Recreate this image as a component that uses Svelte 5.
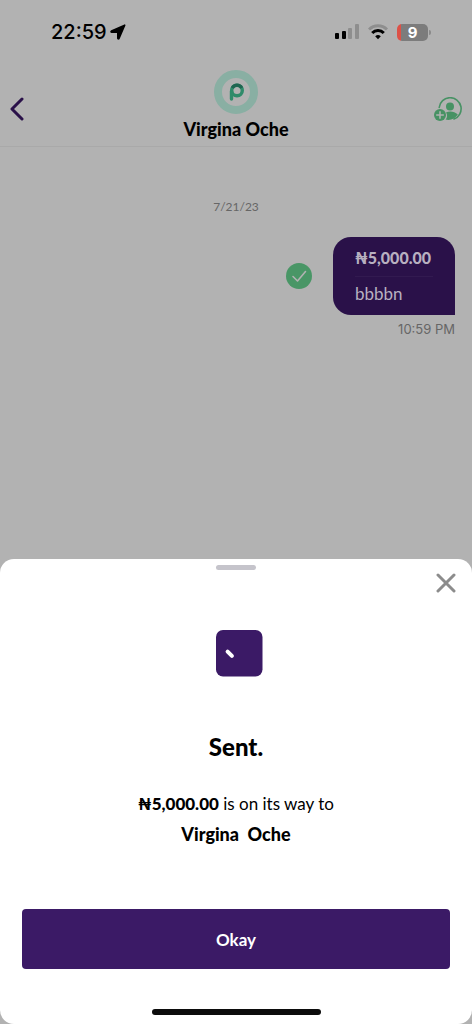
<script lang="ts">
  type Message = { amount: string; note: string; time: string };

  const contact = { first: 'Virgina', last: 'Oche' };
  const chatDate = '7/21/23';
  const messages: Message[] = [{ amount: '₦5,000.00', note: 'bbbbn', time: '10:59 PM' }];

  let open = $state(true);

  function close() {
    open = false;
  }
</script>

<div class="screen">
  <div class="status">
    <div class="clock">
      <span>22:59</span>
      <svg width="16" height="16" viewBox="0 0 16 16" aria-hidden="true">
        <path d="M14.7 1.2 9 14.4c-.3.7-1.2.5-1.2-.2V8.2H1.7c-.8 0-.9-.9-.2-1.2Z" stroke="#000" stroke-width="1.6" stroke-linejoin="round" />
      </svg>
    </div>
    <div class="signals">
      <svg width="24" height="16" viewBox="0 0 24 16" aria-hidden="true">
        <rect y="9" width="4" height="6" rx="1" />
        <rect x="7" y="7" width="4" height="8" rx="1" />
        <rect x="13" y="4" width="4" height="11" rx="1" fill="#8e8e8e" />
        <rect x="20" y="0" width="4" height="15" rx="1" fill="#8e8e8e" />
      </svg>
      <svg width="20" height="16" viewBox="0 0 20 16" fill="none" stroke-width="3" aria-hidden="true">
        <path d="M1 5.5C6 .4 14 .4 19 5.500" stroke="#8e8e8e" />
        <path d="M4.2 9C7.4 5.700 12.600 5.700 15.800 9" stroke="#000" />
        <path d="M7.2 12.2a4.2 4.2 0 0 1 5.6 0L10 15.2Z" fill="#000" />
      </svg>
      <div class="battery"><span>9</span></div>
    </div>
  </div>

  <header class="nav">
    <button class="icon back" type="button" aria-label="Back">
      <svg width="14" height="24" viewBox="0 0 14 24" fill="none" aria-hidden="true">
        <path d="M12 2 2 12l10 10" stroke="#2a1149" stroke-width="3" stroke-linecap="round" stroke-linejoin="round" />
      </svg>
    </button>
    <div class="contact">
      <svg width="44" height="44" viewBox="0 0 44 44" fill="none" aria-hidden="true">
        <circle cx="22" cy="22" r="18" stroke="#89afa3" stroke-width="8" />
        <circle cx="23" cy="20.5" r="5.3" stroke="#2f8b6a" stroke-width="3.4" />
        <path d="M17.500 21v8" stroke="#2f8b6a" stroke-width="3.400" stroke-linecap="round" />
        <path d="M18.300 18a5.300 5.300 0 0 1 9.400 0" stroke="#206651" stroke-width="3.400" />
      </svg>
      <h1>{contact.first} {contact.last}</h1>
    </div>
    <button class="icon add" type="button" aria-label="Add contact">
      <svg width="28" height="24" viewBox="0 0 28 24" fill="none" aria-hidden="true">
        <path d="M5.2 10.5A11 11 0 1 1 20 22" stroke="#479264" stroke-width="1.6" stroke-linecap="round" />
        <circle cx="16" cy="9.5" r="4" fill="#479264" />
        <path d="M12 15.500c3-1.500 8.500-1.500 11.800 2.100-2.500 4.400-7.400 6-12.200 5 1.900-2.200 2.100-4.800.4-7.100Z" fill="#479264" />
        <circle cx="6" cy="18" r="6" fill="#479264" />
        <path d="M6 14.700v6.600M2.700 18h6.600" stroke="#b2b2b2" stroke-width="1.500" stroke-linecap="round" />
      </svg>
    </button>
  </header>

  <main class="chat">
    <p class="date">{chatDate}</p>
    {#each messages as m}
      <div class="message">
        <svg width="26" height="26" viewBox="0 0 26 26" fill="none" aria-label="Delivered" role="img">
          <circle cx="13" cy="13" r="13" fill="#499666" />
          <path d="m7 13.500 4.500 4.500L19.500 8.500" stroke="#b2b2b2" stroke-width="1.600" stroke-linecap="round" stroke-linejoin="round" />
        </svg>
        <div class="bubble">
          <strong>{m.amount}</strong>
          <span>{m.note}</span>
        </div>
      </div>
      <p class="time">{m.time}</p>
    {/each}
  </main>

  {#if open}
    <section class="sheet" role="dialog" aria-labelledby="sheet-title">
      <div class="handle"></div>
      <button class="icon close" type="button" aria-label="Close" onclick={close}>
        <svg width="20" height="20" viewBox="0 0 20 20" aria-hidden="true">
          <path d="m2 2 16 16M18 2 2 18" stroke="#8c8c8c" stroke-width="3" stroke-linecap="round" />
        </svg>
      </button>
      <svg class="mark" width="60" height="60" viewBox="0 0 60 60" aria-hidden="true">
        <rect x="10" y="7" width="46.5" height="46.5" rx="7" fill="#3b1a66" />
        <path d="m21.6 28.600 4.300 4.300" stroke="#fff" stroke-width="4" stroke-linecap="round" />
      </svg>
      <h2 id="sheet-title">Sent.</h2>
      <p class="summary">
        <strong>{messages[0].amount}</strong> is on its way to<br />
        <strong class="name">{contact.first}&nbsp; {contact.last}</strong>
      </p>
      <button class="okay" type="button" onclick={close}>Okay</button>
      <div class="home"></div>
    </section>
  {/if}
</div>

<style>
  :global(body) {
    background: #b2b2b2;
  }
  .screen {
    display: flex;
    flex-direction: column;
    min-height: 100vh;
    background: #b2b2b2;
    color: #000;
    font-family: Lato, 'Noto Sans', sans-serif;
  }
  h1,
  h2,
  p {
    margin: 0;
  }
  .icon {
    display: flex;
    padding: 0;
    border: 0;
    background: none;
    cursor: pointer;
  }
  .status {
    display: flex;
    justify-content: space-between;
    align-items: center;
    height: 64px;
    padding: 0 44px 0 51px;
    box-sizing: border-box;
    font-family: Inter, sans-serif;
  }
  .clock {
    display: flex;
    align-items: center;
    gap: 3px;
    font-size: 20px;
    font-weight: 500;
  }
  .signals {
    display: flex;
    align-items: center;
    gap: 9px;
  }
  .battery {
    position: relative;
    width: 31px;
    height: 17px;
    border-radius: 5px;
    background: linear-gradient(to right, #dd5147 4px, #7c7c7c 4px);
    color: #fff;
    font-size: 15px;
    font-weight: 700;
    line-height: 17px;
    text-align: center;
  }
  .battery::after {
    content: '';
    position: absolute;
    top: 6px;
    right: -3px;
    width: 2px;
    height: 5px;
    border-radius: 0 2px 2px 0;
    background: #8a8a8a;
  }
  .nav {
    display: grid;
    grid-template-columns: 1fr auto 1fr;
    align-items: center;
    padding: 6px 10px;
    border-bottom: 1px solid #a9a9a9;
  }
  .nav .icon {
    margin-top: 8px;
  }
  .add {
    justify-self: end;
  }
  .contact {
    display: flex;
    flex-direction: column;
    align-items: center;
    gap: 4px;
  }
  h1 {
    font-size: 18px;
    font-weight: 900;
    line-height: 22px;
  }
  .chat {
    flex: 1;
    padding: 50px 17px 24px;
  }
  .date {
    color: #666;
    font-size: 12px;
    line-height: 20px;
    text-align: center;
  }
  .message {
    display: flex;
    justify-content: flex-end;
    align-items: center;
    gap: 21px;
    margin-top: 20px;
  }
  .bubble {
    display: flex;
    flex-direction: column;
    min-width: 78px;
    padding: 4px 22px;
    border-radius: 18px 18px 0 18px;
    background: #2a1149;
    color: #b8b0c0;
    font-size: 17px;
    line-height: 34px;
  }
  .bubble strong {
    padding-bottom: 1px;
    border-bottom: 1px solid #321a50;
    font-size: 16px;
    font-weight: 900;
  }
  .time {
    margin-top: 4px;
    color: #666;
    font-family: Inter, sans-serif;
    font-size: 13px;
    line-height: 20px;
    text-align: right;
  }
  .sheet {
    position: relative;
    display: flex;
    flex-direction: column;
    align-items: center;
    padding: 6px 22px 9px;
    border-radius: 14px;
    background: #fff;
  }
  .handle {
    width: 40px;
    height: 5px;
    border-radius: 3px;
    background: #c5c4cb;
  }
  .close {
    position: absolute;
    top: 14px;
    right: 16px;
  }
  .mark {
    margin-top: 53px;
  }
  h2 {
    margin-top: 48px;
    font-size: 24px;
    font-weight: 900;
    line-height: 32px;
  }
  .summary {
    margin-top: 26px;
    font-size: 17px;
    line-height: 30px;
    text-align: center;
  }
  .summary strong {
    font-weight: 900;
  }
  .summary .name {
    font-size: 18px;
  }
  .okay {
    width: 100%;
    height: 60px;
    margin-top: 59px;
    border: 0;
    border-radius: 4px;
    background: #3b1a66;
    color: #fff;
    font-family: inherit;
    font-size: 17px;
    font-weight: 700;
    cursor: pointer;
  }
  .home {
    width: 169px;
    height: 6px;
    margin-top: 40px;
    border-radius: 3px;
    background: #0c0c0c;
  }
</style>
